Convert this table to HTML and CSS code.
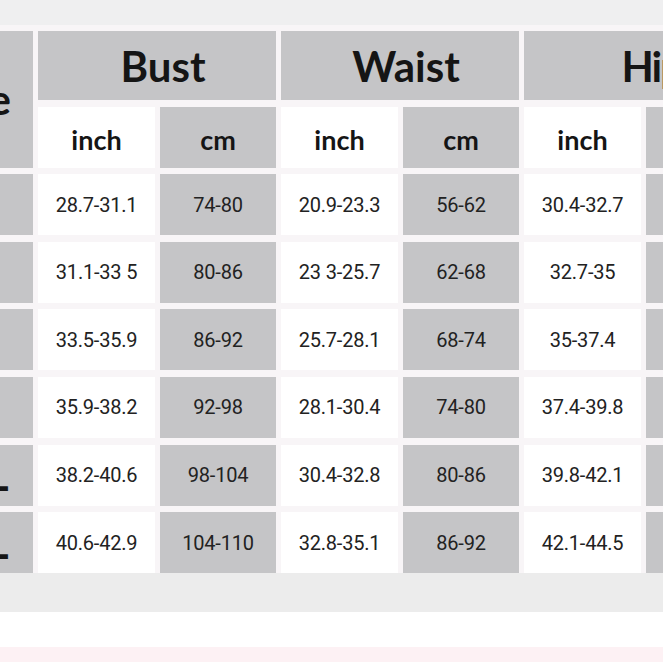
FILE: index.html
```html
<!DOCTYPE html>
<html lang="en">
<head>
<meta charset="utf-8">
<title>Size chart</title>
<link rel="stylesheet" href="styles.css">
</head>
<body>
<div class="page">
  <div class="chart">
    <div class="cell gray size-head">Size</div>
    <div class="cell gray group-head">Bust</div>
    <div class="cell gray group-head">Waist</div>
    <div class="cell gray group-head hips">Hips</div>

    <div class="cell white unit">inch</div>
    <div class="cell gray unit">cm</div>
    <div class="cell white unit">inch</div>
    <div class="cell gray unit">cm</div>
    <div class="cell white unit">inch</div>
    <div class="cell gray unit">cm</div>

    <div class="cell gray size">S</div>
    <div class="cell white num">28.7-31.1</div>
    <div class="cell gray num">74-80</div>
    <div class="cell white num">20.9-23.3</div>
    <div class="cell gray num">56-62</div>
    <div class="cell white num">30.4-32.7</div>
    <div class="cell gray num">77-83</div>

    <div class="cell gray size">M</div>
    <div class="cell white num">31.1-33 5</div>
    <div class="cell gray num">80-86</div>
    <div class="cell white num">23 3-25.7</div>
    <div class="cell gray num">62-68</div>
    <div class="cell white num">32.7-35</div>
    <div class="cell gray num">83-89</div>

    <div class="cell gray size">L</div>
    <div class="cell white num">33.5-35.9</div>
    <div class="cell gray num">86-92</div>
    <div class="cell white num">25.7-28.1</div>
    <div class="cell gray num">68-74</div>
    <div class="cell white num">35-37.4</div>
    <div class="cell gray num">89-95</div>

    <div class="cell gray size">XL</div>
    <div class="cell white num">35.9-38.2</div>
    <div class="cell gray num">92-98</div>
    <div class="cell white num">28.1-30.4</div>
    <div class="cell gray num">74-80</div>
    <div class="cell white num">37.4-39.8</div>
    <div class="cell gray num">95-101</div>

    <div class="cell gray size">2XL</div>
    <div class="cell white num">38.2-40.6</div>
    <div class="cell gray num">98-104</div>
    <div class="cell white num">30.4-32.8</div>
    <div class="cell gray num">80-86</div>
    <div class="cell white num">39.8-42.1</div>
    <div class="cell gray num">101-107</div>

    <div class="cell gray size">3XL</div>
    <div class="cell white num">40.6-42.9</div>
    <div class="cell gray num">104-110</div>
    <div class="cell white num">32.8-35.1</div>
    <div class="cell gray num">86-92</div>
    <div class="cell white num">42.1-44.5</div>
    <div class="cell gray num">107-113</div>
  </div>
  <div class="under"></div>
  <div class="band-white"></div>
  <div class="band-pink"></div>
</div>
</body>
</html>
```

FILE: styles.css
```css
html, body {
  margin: 0;
  padding: 0;
}

body {
  width: 663px;
  height: 662px;
  overflow: hidden;
  background: #efeff0;
  font-family: Lato, "Noto Sans", sans-serif;
  color: #151515;
}

.page {
  display: flex;
  flex-direction: column;
  padding-top: 25px;
  width: 663px;
  overflow: hidden;
}

.chart {
  display: grid;
  grid-template-columns: 101px 117px 116px 117px 116px 117px 116px;
  grid-template-rows: 69px 61px repeat(6, 61px);
  column-gap: 5px;
  row-gap: 6.6px;
  padding: 6px 6px 0 6px;
  margin-left: -74px;
  width: max-content;
  background: #f8f5f7;
}

.cell {
  display: flex;
  align-items: center;
  justify-content: center;
  white-space: nowrap;
}

.gray {
  background: #c5c5c7;
}

.white {
  background: #ffffff;
}

.size-head {
  grid-row: span 2;
  font-size: 42px;
  font-weight: 700;
  padding-right: 18px;
}

.group-head {
  grid-column: span 2;
  font-size: 42px;
  font-weight: 700;
  padding-left: 12px;
}

.group-head.hips {
  padding-left: 34px;
  letter-spacing: -2px;
}

.unit {
  font-size: 27px;
  font-weight: 700;
  padding-top: 4px;
}

.size {
  font-size: 42px;
  font-weight: 700;
  padding-right: 22px;
}

.num {
  font-family: Roboto, "Noto Sans", sans-serif;
  font-size: 20px;
  letter-spacing: -0.2px;
  color: #222222;
}

.under {
  height: 39px;
  background: #ececec;
}

.band-white {
  height: 35px;
  background: #ffffff;
}

.band-pink {
  height: 20px;
  background: #fdf1f4;
}
```
